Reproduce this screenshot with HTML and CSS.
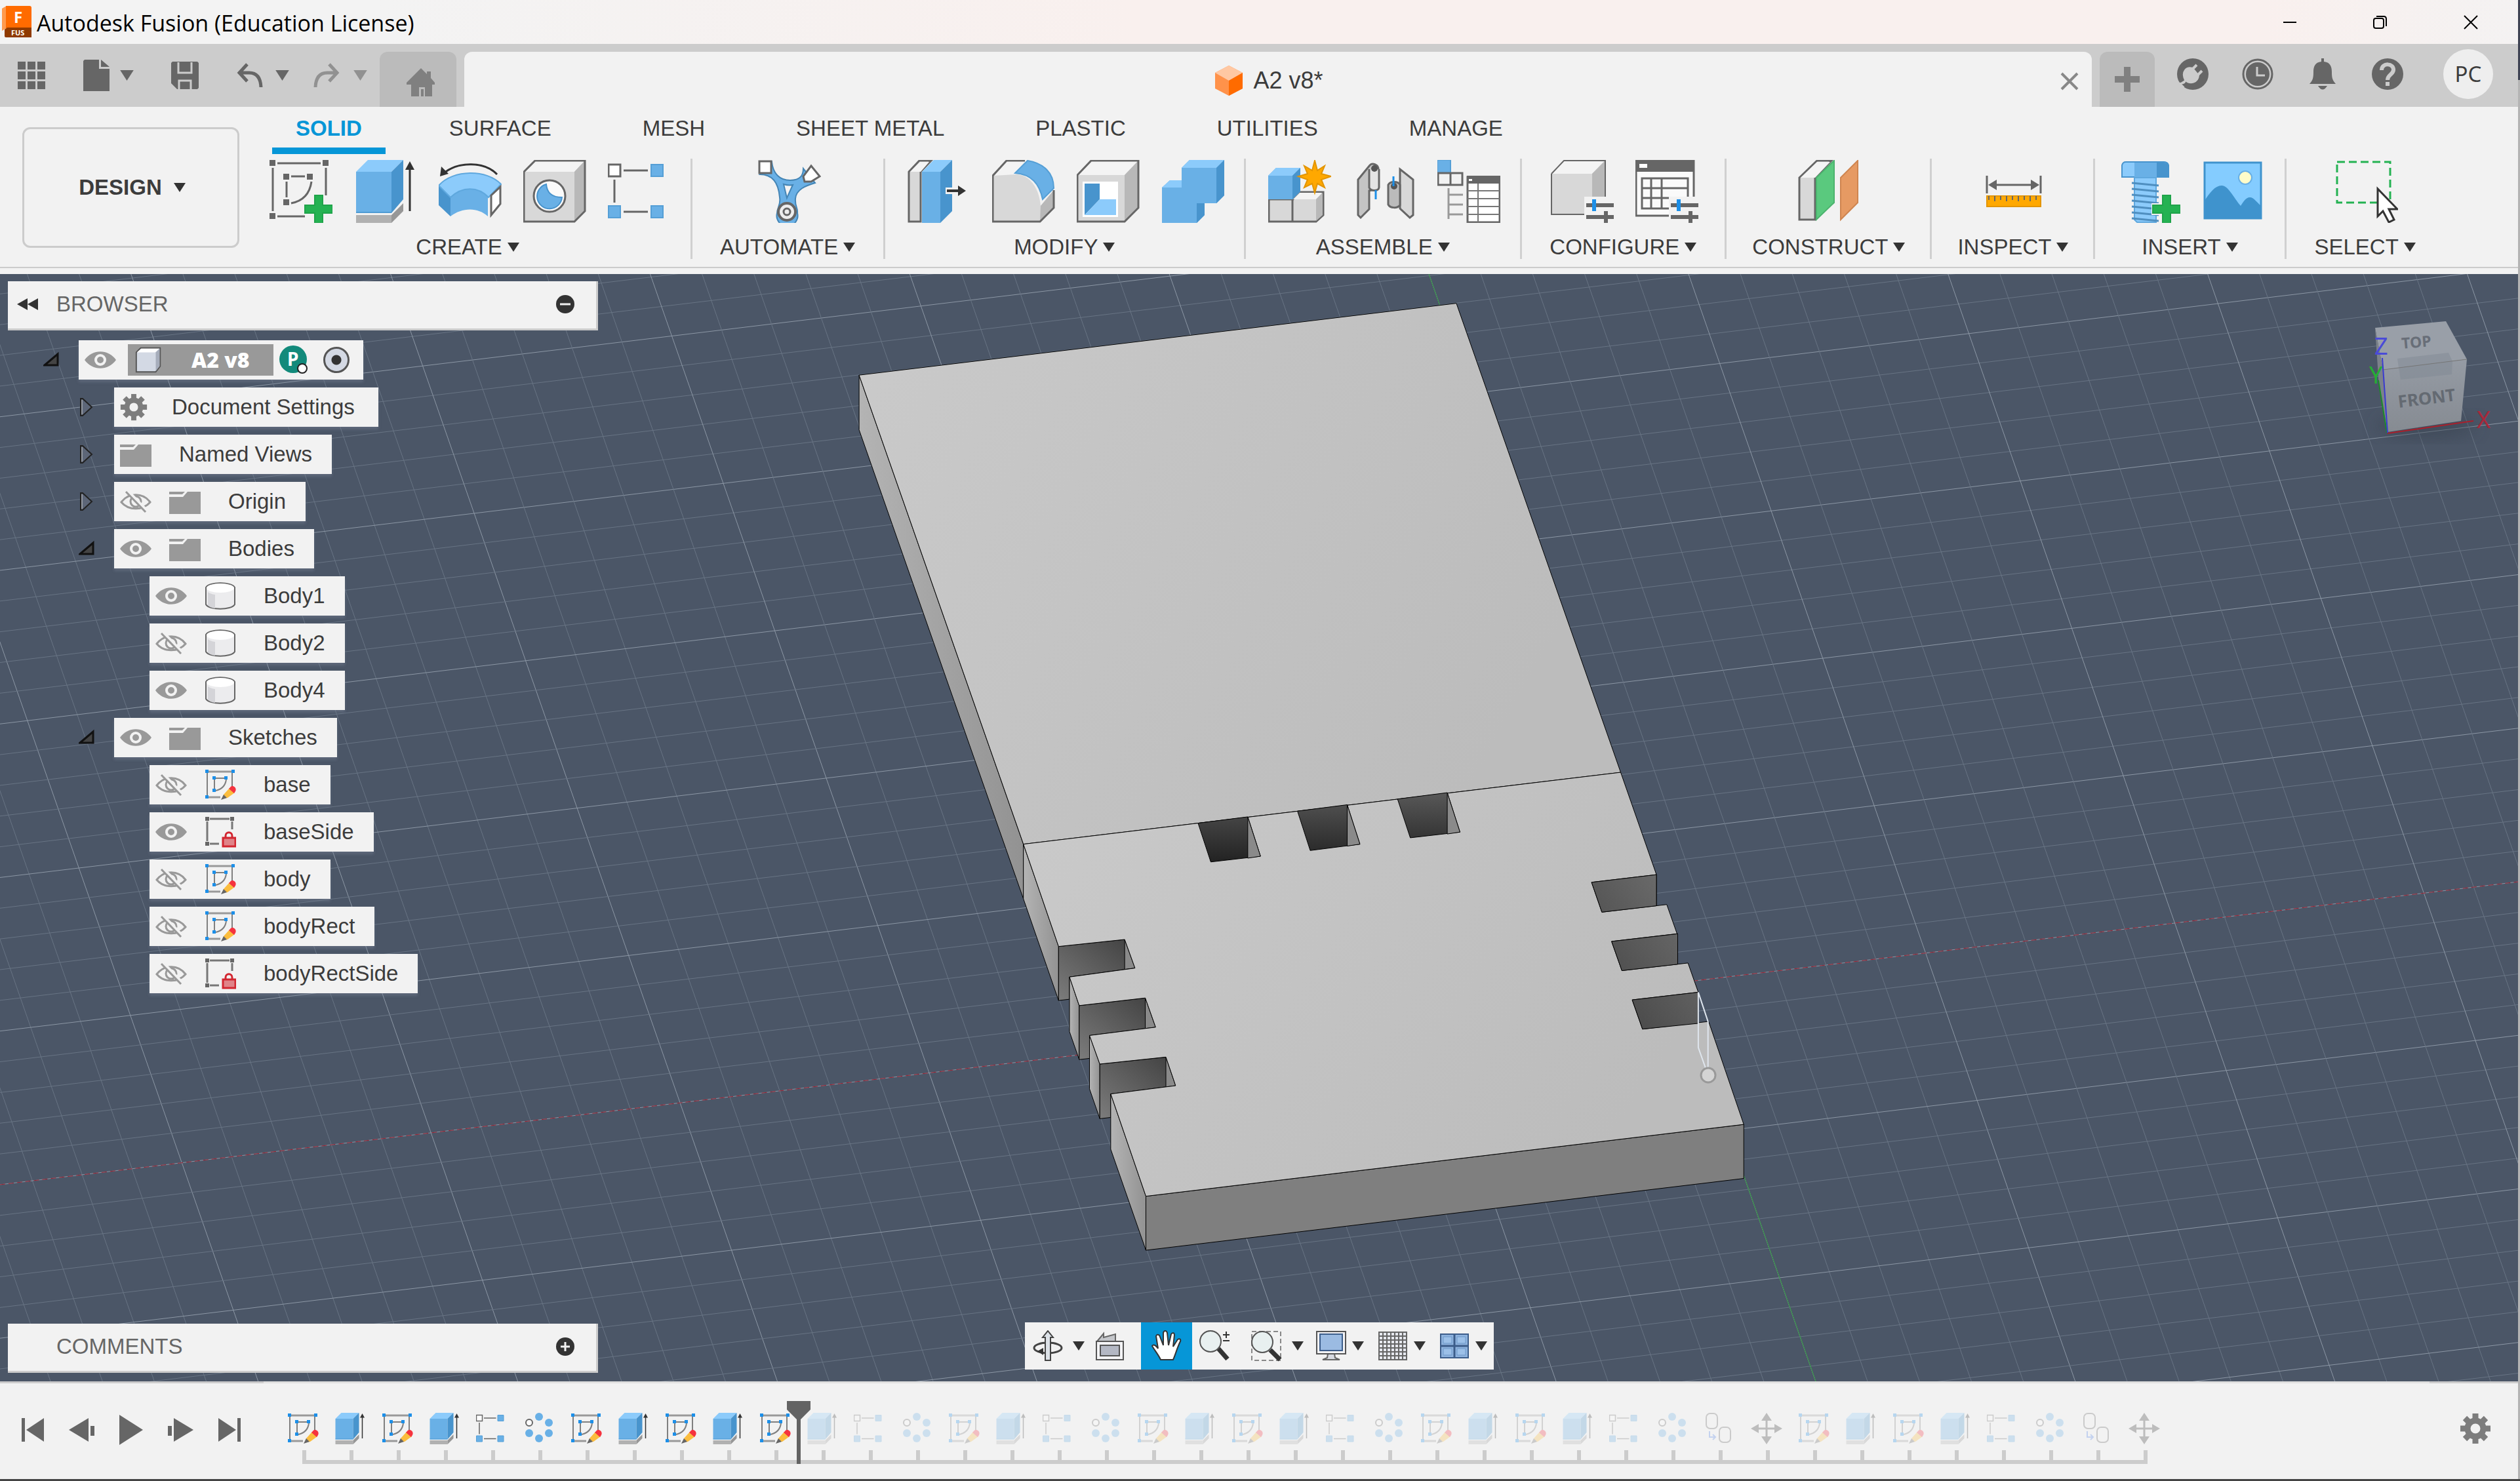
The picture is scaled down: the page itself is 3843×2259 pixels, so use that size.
FILE: index.html
```html
<!DOCTYPE html>
<html lang="en">
<head>
<meta charset="utf-8">
<title>Autodesk Fusion (Education License)</title>
<link rel="stylesheet" href="styles.css">
</head>
<body>
<svg class="sprite" aria-hidden="true">
  <symbol id="sketch-new" viewBox="0 0 96 96">
    <g fill="#666"><path d="M0 0h9v9H0zM81 0h9v9h-9zM0 81h9v9H0zM21 21h9v9h-9zM57 21h9v9h-9zM21 60h9v9h-9z"/></g>
    <path d="M12 5h66M5 12v66M12 86h42M86 12v42M33 25h21M26 33v24M64 33q-4 28-31 33" fill="none" stroke="#666" stroke-width="3"/>
    <path d="M69 54h12v15h15v12H81v15H69V81H54V69h15z" fill="#24b252" stroke="#1fa34a" stroke-width="2"/>
  </symbol>
  <symbol id="extrude" viewBox="0 0 96 96">
    <path d="M3 84h54v12H3z" fill="#b1b1b1"/><path d="M57 84l18-18v12L57 96z" fill="#979797"/>
    <path d="M3 18h54v63H3z" fill="#69b0e6"/><path d="M3 18L21 0h54L57 18z" fill="#8ccbfb"/><path d="M57 18L75 0v60L57 81z" fill="#4894cd"/>
    <path d="M3 80h54" stroke="#4f9bd3" stroke-width="2"/>
    <path d="M85 12v66" stroke="#333" stroke-width="3"/><path d="M85 2l7 13H78z" fill="#333"/>
  </symbol>
  <symbol id="revolve" viewBox="0 0 96 96">
    <path d="M0 39l18 17v30L0 69z" fill="#4894cd"/>
    <path d="M18 56C36 40 60 40 75 56v30C60 72 36 72 18 86z" fill="#69b0e6"/>
    <path d="M0 39C22 14 74 14 95 37L76 57C60 40 36 40 18 57z" fill="#8ccbfb" stroke="#5fa8de" stroke-width="2"/>
    <path d="M80 54l14-13v26L80 84z" fill="#fff" stroke="#666" stroke-width="3"/>
    <path d="M89 22C70 2 30 2 8 20" fill="none" stroke="#333" stroke-width="3"/><path d="M2 25l2-15 11 11z" fill="#333"/>
  </symbol>
  <symbol id="hole" viewBox="0 0 96 96">
    <path d="M1 18L18 1h76v77L78 94H1z" fill="#d8d8d8"/><path d="M1 18L18 1h76L78 18z" fill="#f4f4f4"/><path d="M78 18L94 1v77L78 94z" fill="#b8b8b8"/>
    <path d="M1 18L18 1h76v77L78 94H1z" fill="none" stroke="#666" stroke-width="3"/>
    <circle cx="40" cy="55" r="24" fill="#fafafa" stroke="#666" stroke-width="3"/>
    <path d="M35 37c1 13 9 20 24 20a19 19 0 1 1-24-20z" fill="#69b0e6" stroke="#4894cd" stroke-width="2"/>
  </symbol>
  <symbol id="pattern" viewBox="0 0 96 96">
    <path d="M1 7h18v18H1z" fill="#fff" stroke="#666" stroke-width="3"/>
    <path d="M66 7h18v18H66zM1 70h18v18H1zM66 70h18v18H66z" fill="#69b0e6" stroke="#559fd6" stroke-width="2"/>
    <path d="M24 16h37M24 79h37M10 30v35" stroke="#666" stroke-width="3"/>
  </symbol>
  <symbol id="automate" viewBox="0 0 96 96">
    <path d="M3 22L21 3c2 18 12 28 28 28s20-8 20-18l18 22c-14 4-29 10-30 24-1 12 4 14 3 22a16 16 0 1 1-31 0c0-8 6-12 4-24C31 32 20 22 3 22z" fill="#69b0e6" stroke="#4485b5" stroke-width="2"/>
    <path d="M39 37c6 2 9 2 14 1l-9 20z" fill="#f4f4f4" stroke="#4485b5" stroke-width="2"/>
    <path d="M2 2h18v18H2z" fill="#fff" stroke="#666" stroke-width="3"/><path d="M81 9l13 16-13 8H71l-2-8z" fill="#fff" stroke="#666" stroke-width="3"/>
    <circle cx="44" cy="79" r="13" fill="#eee" stroke="#666" stroke-width="4"/><circle cx="44" cy="79" r="5" fill="none" stroke="#666" stroke-width="3"/>
  </symbol>
  <symbol id="press-pull" viewBox="0 0 96 96">
    <path d="M2 18L18 1h18L20 18v76H2z" fill="#d8d8d8" stroke="#666" stroke-width="3"/><path d="M4 18L19 3h14L20 18z" fill="#f4f4f4"/>
    <path d="M22 18h28v78H22z" fill="#69b0e6"/><path d="M22 18L40 0h28L50 18z" fill="#8ccbfb"/><path d="M50 18L68 0v78L50 96z" fill="#4894cd"/>
    <path d="M58 42h14v-8l20 13-20 13v-8H58z" fill="#f2f2f2"/><path d="M60 45h17v-6l12 8-12 8v-6H60z" fill="#333"/>
  </symbol>
  <symbol id="fillet" viewBox="0 0 96 96">
    <path d="M1 24L22 1h28L36 22c22 0 36 22 38 48l20-23v26L73 94H1z" fill="#d8d8d8"/><path d="M1 24L22 1h28L36 22z" fill="#f4f4f4"/><path d="M74 70l20-24v27L73 94z" fill="#b8b8b8"/>
    <path d="M50 1H22L1 24v70h72l21-21V46" fill="none" stroke="#666" stroke-width="3"/>
    <path d="M54 1c24 4 40 18 40 42L77 60C72 36 60 22 35 20z" fill="#69b0e6" stroke="#559fd6" stroke-width="2"/>
  </symbol>
  <symbol id="shell" viewBox="0 0 96 96">
    <path d="M1 23L22 1h72v72L73 94H1z" fill="#d8d8d8"/><path d="M1 23L22 1h72L73 23z" fill="#f4f4f4"/><path d="M73 23L94 1v72L73 94z" fill="#b8b8b8"/>
    <path d="M1 23L22 1h72v72L73 94H1z" fill="none" stroke="#666" stroke-width="3"/>
    <path d="M9 33h54v54H9z" fill="#fff"/><path d="M12 36h23v24L12 84z" fill="#4894cd"/><path d="M12 84l23-24h25v24z" fill="#8ccbfb"/>
  </symbol>
  <symbol id="combine" viewBox="0 0 96 96">
    <path d="M1 42l12-11h18V12L43 0h53v54L84 66H66v18L54 96H1z" fill="#69b0e6"/>
    <path d="M1 42l12-11h18v11zM31 12L43 0h53L84 12z" fill="#8ccbfb"/><path d="M84 12L96 0v54L84 66zM54 66h12v18L54 96z" fill="#4894cd"/>
  </symbol>
  <symbol id="component" viewBox="0 0 96 96">
    <path d="M1 60h37l10-11h36v35L73 94H1z" fill="#d8d8d8" stroke="#666" stroke-width="3"/><path d="M38 60l10-10h34L73 60z" fill="#f4f4f4"/><path d="M73 60l10-10v34L73 93z" fill="#b8b8b8"/><path d="M37 60v34" stroke="#666" stroke-width="3"/>
    <path d="M0 24l12-12h37v36L37 60H0z" fill="#69b0e6"/><path d="M0 24l12-12h37L37 24z" fill="#8ccbfb"/><path d="M37 24l12-12v36L37 60z" fill="#4894cd"/>
    <path d="M71 1l4 15 11-7-5 12 15 4-15 5 5 12-11-6-4 14-4-14-12 6 5-12-14-5 14-4-5-12 12 7z" fill="#ffa800" stroke="#e39500" stroke-width="2"/>
  </symbol>
  <symbol id="joint" viewBox="0 0 96 96">
    <g stroke="#666" stroke-width="3"><path d="M8 30L26 8c4-4 12-1 13 5v30l-14 4v28L12 88l-4-4z" fill="#c4c4c4"/><path d="M25 14v28c2 6 14 6 15 0V14" fill="#e4e4e4"/><path d="M92 30L72 14v60l15 14 5-4z" fill="#d8d8d8"/><path d="M54 38v30c3 6 14 6 18 1V38c-3-6-15-6-18 0z" fill="#bbb"/></g>
    <circle cx="33" cy="13" r="5" fill="#555"/><circle cx="63" cy="40" r="5" fill="#555"/><path d="M35 46v14M62 25v15" stroke="#1c8fe8" stroke-width="3"/>
  </symbol>
  <symbol id="bom" viewBox="0 0 96 96">
    <path d="M0 0h20v20H0z" fill="#69b0e6" stroke="#559fd6" stroke-width="2"/><path d="M1 20h37v18H1zM20 20v18" fill="none" stroke="#666" stroke-width="3"/>
    <path d="M17 43v47M17 53h22M17 68h22M17 83h22" stroke="#999" stroke-width="3"/>
    <path d="M46 26h49v69H46z" fill="#fff" stroke="#666" stroke-width="3"/><path d="M45 24h51v12H45z" fill="#666"/><path d="M48 29h5v3h-5z" fill="#fff"/><path d="M46 47h49M46 59h49M46 71h49M46 83h49M62 36v59" stroke="#777" stroke-width="2"/>
  </symbol>
  <symbol id="config-part" viewBox="0 0 96 96">
    <path d="M1 21L20 1h62v82H1z" fill="#d8d8d8"/><path d="M1 21L20 1h62L63 21z" fill="#f4f4f4"/><path d="M63 21L83 1v62L63 83z" fill="#b8b8b8"/><path d="M1 21L20 1h63v62M1 21v62h62" fill="none" stroke="#666" stroke-width="2"/>
    <use href="#sliders"/>
  </symbol>
  <g id="sliders"><path d="M51 56h45v40H51z" fill="#f2f2f2"/><path d="M54 66h42v6H54zM54 84h42v6H54zM81 78h6v18h-6z" fill="#666"/><path d="M63 60h6v18h-6z" fill="#1c8fe8"/></g>
  <symbol id="config-table" viewBox="0 0 96 96">
    <path d="M1 1h88v84H1z" fill="#fafafa" stroke="#666" stroke-width="3"/><path d="M0 0h90v18H0z" fill="#666"/><path d="M6 6h12v6H6z" fill="#fff"/>
    <path d="M10 28h70v46H10zM10 43h70M10 58h70M24 28v46M40 28v46" fill="none" stroke="#666" stroke-width="3"/>
    <use href="#sliders"/>
  </symbol>
  <symbol id="construct" viewBox="0 0 96 96">
    <path d="M2 27L29 1h22L26 27v64H2z" fill="#d8d8d8" stroke="#666" stroke-width="3"/><path d="M4 27L29 3h20L26 27z" fill="#f4f4f4"/>
    <path d="M28 27L55 1v64L28 91z" fill="#5ac97e" stroke="#4cb36e" stroke-width="2"/><path d="M65 27L91 1v64L65 91z" fill="#e69a63" stroke="#cf8550" stroke-width="2"/>
  </symbol>
  <symbol id="measure" viewBox="0 0 96 96">
    <path d="M7 24v27M89 24v27M14 38h68" stroke="#666" stroke-width="3"/><path d="M9 38l13-8v16zM87 38l-13-8v16z" fill="#666"/>
    <path d="M7 55h82v16H7z" fill="#ffa800" stroke="#e39500" stroke-width="2"/><path d="M10 55v6M19 55v8M28 55v6M37 55v8M46 55v6M55 55v8M64 55v6M73 55v8M82 55v6" stroke="#666" stroke-width="2"/>
  </symbol>
  <symbol id="fastener" viewBox="0 0 96 96">
    <path d="M7 8c1-4 3-5 6-5h58c4 0 6 1 7 5v18H7z" fill="#8ccbfb" stroke="#4894cd" stroke-width="2"/><path d="M26 4h34v22H26z" fill="#69b0e6"/><path d="M60 4h11c4 0 6 1 7 4v18H60z" fill="#4894cd"/>
    <path d="M26 27h33v68H30l-4-4z" fill="#8ccbfb" stroke="#5fa8de" stroke-width="2"/>
    <path d="M22 35l41 4M22 44l41 4M22 53l41 4M22 62l41 4M22 71l41 4M22 80l41 4M22 89l41 4" stroke="#4f8fc0" stroke-width="3"/>
    <path d="M66 51h18v15h12v18H84v12H66V84H52V66h14z" fill="#f2f2f2"/><path d="M69 54h12v15h15v12H81v15H69V81H54V69h15z" fill="#24b252" stroke="#1fa34a" stroke-width="2"/>
  </symbol>
  <symbol id="canvas" viewBox="0 0 96 96">
    <path d="M4 4h86v85H4z" fill="#84ccff" stroke="#3f93cd" stroke-width="3"/><ellipse cx="66" cy="27" rx="10" ry="10" fill="#fffcc9" stroke="#69b0e6" stroke-width="2"/>
    <path d="M4 62c8-12 16-23 26-23s18 18 29 31c4-6 8-13 14-13s11 8 17 13v19H4z" fill="#3f93cd"/>
  </symbol>
  <symbol id="select" viewBox="0 0 96 96">
    <path d="M3 3h81v62H3z" fill="none" stroke="#24b252" stroke-width="3" stroke-dasharray="12 6"/>
    <path d="M65 44v42l8-8 9 17 8-4-8-16h13z" fill="#fff" stroke="#333" stroke-width="3"/>
  </symbol>
  <symbol id="sketch" viewBox="0 0 48 48">
    <path d="M6 4h36M6 43h18" fill="none" stroke="#999" stroke-width="3"/>
    <path d="M4 6v36M42 6v22M16 14h14M15 16v16M33 16q-2 14-16 17" fill="none" stroke="#808080" stroke-width="2"/>
    <path d="M1 1h5v5H1zM41 1h5v5h-5zM1 40h5v5H1zM12 11h5v5h-5zM30 11h5v5h-5zM12 30h5v5h-5z" fill="#1c8fe8"/>
    <path d="M38 29l8 7-11 8-8 1 2-6z" fill="#fbbd3e"/><path d="M29 39l5 5-9 3z" fill="#666"/><path d="M39 28c3-5 11 0 8 6l-2 3-8-7z" fill="#f5333f"/>
  </symbol>
  <symbol id="sketch-locked" viewBox="0 0 48 48">
    <path d="M8 4h30M4 8v30M42 8v12M8 42h14" fill="none" stroke="#777" stroke-width="3"/>
    <path d="M1 1h6v6H1zM39 1h6v6h-6zM1 39h6v6H1z" fill="#666"/>
    <path d="M32 34v-4c0-7 10-7 10 0v4" fill="none" stroke="#d22630" stroke-width="3"/><path d="M28 33h19v13H28z" fill="#e08388" stroke="#d22630" stroke-width="3"/>
  </symbol>
  <symbol id="circular" viewBox="0 0 48 48">
    <circle cx="9" cy="15" r="5" fill="#fff" stroke="#666" stroke-width="2"/>
    <g fill="#69b0e6"><circle cx="24" cy="6" r="6"/><circle cx="39" cy="15" r="6"/><circle cx="39" cy="31" r="6"/><circle cx="24" cy="39" r="6"/><circle cx="9" cy="31" r="6"/></g>
  </symbol>
  <symbol id="rigid" viewBox="0 0 48 48">
    <g fill="#f4f4f4" stroke="#666" stroke-width="2"><rect x="4" y="1" width="17" height="23" rx="6"/><rect x="24" y="22" width="17" height="23" rx="6"/></g><path d="M9 28v9h8M14 33l4 4-4 4" fill="none" stroke="#4b7fe8" stroke-width="2"/>
  </symbol>
  <symbol id="move" viewBox="0 0 48 48"><path d="M24 8v32M8 24h32" stroke="#333" stroke-width="3"/><path d="M24 0l8 12H16zM24 48l8-12H16zM0 24l12-7v14zM48 24l-12-7v14z" fill="#333"/></symbol>
  <symbol id="eye" viewBox="0 0 48 48"><path d="M0 24C12 7 36 7 48 24C36 41 12 41 0 24z" fill="#999"/><circle cx="24" cy="24" r="9" fill="#f2f2f2"/><circle cx="24" cy="24" r="5" fill="#999"/></symbol>
  <symbol id="eye-off" viewBox="0 0 48 48"><g fill="none" stroke="#999" stroke-width="3"><path d="M2 25C13 10 35 10 46 25C35 38 13 38 2 25z"/><circle cx="24" cy="24" r="8"/></g><path d="M12 9l30 31" stroke="#f2f2f2" stroke-width="6"/><path d="M9 9l30 31" stroke="#999" stroke-width="3"/></symbol>
  <symbol id="folder" viewBox="0 0 48 48"><path d="M0 9h24l-4 4H0zM0 17h21l7-8h20v34H0z" fill="#999"/></symbol>
  <symbol id="gear" viewBox="0 0 48 48"><circle cx="24" cy="24" r="12" fill="none" stroke="#7d7d7d" stroke-width="9"/><path d="M24 1v9M24 38v9M1 24h9M38 24h9M8 8l6 6M34 34l6 6M40 8l-6 6M14 34l-6 6" stroke="#7d7d7d" stroke-width="9"/></symbol>
  <symbol id="cylinder" viewBox="0 0 48 48"><path d="M2 11v26c5 9 39 9 44 0V11C41 2 7 2 2 11z" fill="#ececee" stroke="#666" stroke-width="2"/><ellipse cx="24" cy="12" rx="21" ry="7" fill="#fff"/><path d="M5 18q4 3 11 4v21q-8-1-11-5z" fill="#d4d4d8"/></symbol>
  <symbol id="cube" viewBox="0 0 48 48"><path d="M4 12l7-7h31v29l-7 9H4z" fill="#d3d9e4" stroke="#555" stroke-width="2"/><path d="M5 12l7-6h29l-7 6z" fill="#fff"/><path d="M35 12l6-6v28l-6 8z" fill="#a6adbb"/></symbol>
  <symbol id="open" viewBox="0 0 24 24"><path d="M2 20L22 3v17z" fill="#444" stroke="#111" stroke-width="3"/></symbol>
  <symbol id="closed" viewBox="0 0 24 30"><path d="M3 2h3l14 13L6 28H3z" fill="#5d6678" stroke="#222" stroke-width="2"/><path d="M5 4v22" stroke="#ccc" stroke-width="1"/></symbol>
  <symbol id="caret" viewBox="0 0 18 14"><path d="M0 0h18L9 14z" fill="currentColor"/></symbol>
</svg>

<header class="titlebar">
  <svg class="app-logo" viewBox="0 0 46 50"><path d="M0 4L7 0v34L0 38z" fill="#ff9a4d"/><path d="M6 0h36q3 0 3 3v31H6z" fill="#ff6b00"/><path d="M4 36l4-3h37v15H6q-2 0-2-2z" fill="#8f3a00"/><text x="18" y="26" class="logo-f">F</text><text x="14" y="45" class="logo-fus">FUS</text></svg>
  <h1>Autodesk Fusion (Education License)</h1>
  <div class="window-controls">
    <button aria-label="Minimize"><svg viewBox="0 0 22 22"><path d="M1 11h20" stroke="#000" stroke-width="2"/></svg></button>
    <button aria-label="Restore"><svg viewBox="0 0 22 22"><rect x="1" y="5" width="15" height="15" rx="3" fill="none" stroke="#000" stroke-width="2"/><path d="M5 2h11q4 0 4 4v11" fill="none" stroke="#000" stroke-width="2"/></svg></button>
    <button aria-label="Close"><svg viewBox="0 0 22 22"><path d="M1 1l20 20M21 1L1 21" stroke="#000" stroke-width="2"/></svg></button>
  </div>
</header>

<nav class="tabstrip">
  <div class="quick">
    <button aria-label="Data panel"><svg class="i48" viewBox="0 0 48 48"><g fill="#666"><path d="M3 3h12v12H3zM18 3h12v12H18zM33 3h12v12H33zM3 18h12v12H3zM18 18h12v12H18zM33 18h12v12H33zM3 33h12v12H3zM18 33h12v12H18zM33 33h12v12H33z"/></g></svg></button>
    <button aria-label="File" class="with-caret q-file"><svg class="i48" viewBox="0 0 48 48"><path d="M6 0h22v14h16v34H4V2zM31 0l13 11H31z" fill="#666"/></svg><svg class="caret-lg"><use href="#caret"/></svg></button>
    <button aria-label="Save" class="q-save"><svg class="i48" viewBox="0 0 48 48"><path d="M5 3h38l2 2v38l-2 2H12l-9-9V5z" fill="#666"/><path d="M14 4v16h20V4M15 45V32h18v13" fill="none" stroke="#ccc" stroke-width="3"/></svg></button>
    <button aria-label="Undo" class="with-caret q-undo"><svg class="i42" viewBox="0 0 42 42"><path d="M17 4L5 17l12 13M6 17h14q17 0 18 22" fill="none" stroke="#666" stroke-width="5"/></svg><svg class="caret-lg"><use href="#caret"/></svg></button>
    <button aria-label="Redo" class="with-caret q-redo"><svg class="i42" viewBox="0 0 42 42"><path d="M25 4l12 13-12 13M36 17H22Q5 17 4 39" fill="none" stroke="#919191" stroke-width="5"/></svg><svg class="caret-lg"><use href="#caret"/></svg></button>
  </div>
  <button class="home-tab" aria-label="Home"><svg class="i48" viewBox="0 0 48 48"><path d="M24 2l9 9V7h6v10l6 7v3h-4v18H30V31h-9v14H9V27H2v-3zM24 34h4v11h-4z" fill="#808080"/></svg></button>
  <div class="doc-tab">
    <div class="doc-name"><svg viewBox="0 0 44 48"><path d="M22 1l21 11v24L22 47 1 36V12z" fill="#ff924a"/><path d="M22 1l21 11-21 12L1 12z" fill="#ffc8a3"/><path d="M22 24l21-12v24L22 47z" fill="#ff6b00"/></svg><span>A2 v8*</span></div>
    <button class="tab-close" aria-label="Close tab"><svg viewBox="0 0 28 28"><path d="M2 2l24 24M26 2L2 26" stroke="#888" stroke-width="4"/></svg></button>
  </div>
  <button class="plus-tab" aria-label="New tab"><svg viewBox="0 0 38 38"><path d="M14 0h10v14h14v10H24v14H14V24H0V14h14z" fill="#808080"/></svg></button>
  <div class="account">
    <button aria-label="Extensions"><svg class="i48" viewBox="0 0 48 48"><circle cx="24" cy="24" r="24" fill="#666"/><path d="M4 38c7 2 9-2 8-5M12 33c-6-13 2-21 12-18l9 11c-1 11-13 15-21 7z" fill="#ccc" stroke="#ccc" stroke-width="2"/><path d="M22 18l8-8M30 27l8-8M3 38l7 7" stroke="#ccc" stroke-width="4"/></svg></button>
    <button aria-label="Job status"><svg class="i48" viewBox="0 0 48 48"><circle cx="24" cy="24" r="22" fill="none" stroke="#666" stroke-width="3"/><circle cx="24" cy="24" r="18" fill="#666"/><path d="M23 13v13h12" fill="none" stroke="#ccc" stroke-width="3"/></svg></button>
    <button aria-label="Notifications"><svg class="i48" viewBox="0 0 48 48"><path d="M22 0h4v5c10 1 12 8 12 16 0 11 2 13 6 18H4c4-5 6-7 6-18 0-8 2-15 12-16zM17 42h14q-7 11-14 0z" fill="#666"/></svg></button>
    <button aria-label="Help"><svg class="i48" viewBox="0 0 48 48"><circle cx="24" cy="24" r="24" fill="#666"/><path d="M15 18c0-12 19-11 18 0-1 7-9 7-9 15M24 36v6" fill="none" stroke="#ccc" stroke-width="6"/></svg></button>
    <button class="avatar">PC</button>
  </div>
</nav>

<section class="ribbon">
  <button class="workspace">DESIGN <svg class="caret"><use href="#caret"/></svg></button>
  <div class="ribbon-main">
    <div class="ribbon-tabs">
      <button class="active">SOLID</button><button>SURFACE</button><button>MESH</button><button>SHEET METAL</button><button>PLASTIC</button><button>UTILITIES</button><button>MANAGE</button>
    </div>
    <div class="groups">
      <div class="group"><div class="tools"><svg><use href="#sketch-new"/></svg><svg><use href="#extrude"/></svg><svg><use href="#revolve"/></svg><svg><use href="#hole"/></svg><svg><use href="#pattern"/></svg></div><button>CREATE<svg class="caret"><use href="#caret"/></svg></button></div>
      <div class="group"><div class="tools"><svg><use href="#automate"/></svg></div><button>AUTOMATE<svg class="caret"><use href="#caret"/></svg></button></div>
      <div class="group"><div class="tools"><svg><use href="#press-pull"/></svg><svg><use href="#fillet"/></svg><svg><use href="#shell"/></svg><svg><use href="#combine"/></svg></div><button>MODIFY<svg class="caret"><use href="#caret"/></svg></button></div>
      <div class="group"><div class="tools"><svg><use href="#component"/></svg><svg><use href="#joint"/></svg><svg><use href="#bom"/></svg></div><button>ASSEMBLE<svg class="caret"><use href="#caret"/></svg></button></div>
      <div class="group"><div class="tools"><svg><use href="#config-part"/></svg><svg><use href="#config-table"/></svg></div><button>CONFIGURE<svg class="caret"><use href="#caret"/></svg></button></div>
      <div class="group tight"><div class="tools"><svg><use href="#construct"/></svg></div><button>CONSTRUCT<svg class="caret"><use href="#caret"/></svg></button></div>
      <div class="group tight"><div class="tools"><svg><use href="#measure"/></svg></div><button>INSPECT<svg class="caret"><use href="#caret"/></svg></button></div>
      <div class="group"><div class="tools"><svg><use href="#fastener"/></svg><svg><use href="#canvas"/></svg></div><button>INSERT<svg class="caret"><use href="#caret"/></svg></button></div>
      <div class="group"><div class="tools"><svg><use href="#select"/></svg></div><button>SELECT<svg class="caret"><use href="#caret"/></svg></button></div>
    </div>
  </div>
</section>

<main class="viewport">
  <svg class="scene" viewBox="0 418 3840 1689" preserveAspectRatio="xMidYMid slice">
    <defs>
      <linearGradient id="top" x1="0" y1="0" x2="1" y2=".4"><stop offset="0" stop-color="#cacaca"/><stop offset="1" stop-color="#bcbcbc"/></linearGradient>
      <linearGradient id="side" x1="0" y1="0" x2="1" y2="0"><stop offset="0" stop-color="#b4b4b4"/><stop offset="1" stop-color="#929292"/></linearGradient>
      <linearGradient id="pit" x1="0" y1="0" x2="0" y2="1"><stop offset="0" stop-color="#585858"/><stop offset="1" stop-color="#222"/></linearGradient>
      <linearGradient id="notch" x1="0" y1="1" x2="1" y2="0"><stop offset="0" stop-color="#7c7c7c"/><stop offset="1" stop-color="#404040"/></linearGradient>
      <linearGradient id="notch-r" x1="0" y1="1" x2="1" y2="0"><stop offset="0" stop-color="#404040"/><stop offset="1" stop-color="#747474"/></linearGradient>
      <linearGradient id="cube-front" x1="0" y1="0" x2="0" y2="1"><stop offset="0" stop-color="#959ba4"/><stop offset="1" stop-color="#868b92"/></linearGradient>
      <filter id="soft" x="-20%" y="-20%" width="140%" height="140%"><feGaussianBlur stdDeviation="12"/></filter>
    </defs>
    <g id="grid"></g>
    <path d="M0 1807L3840 1345" stroke="#a02030" stroke-width="1" stroke-dasharray="8 5"/>
    <path d="M2179 418L2769 2107" stroke="#2c9a3c" stroke-width="1"/>
    <g class="model" transform="translate(1250 420) scale(.9247 .9694)">
      <path class="side" d="M65 157L336 895V981L65 243z"/>
      <path class="side" d="M336 895L394 1056V1141L336 981z"/>
      <path class="cut" d="M394 1056L503 1045L520 1090L412 1104V1139L394 1141z"/>
      <path class="side" d="M412 1104L428 1149V1234L412 1190z"/>
      <path class="cut" d="M428 1149L537 1137L554 1183L446 1196V1232L428 1234z"/>
      <path class="side" d="M445 1196L462 1241V1327L445 1280z"/>
      <path class="cut" d="M462 1241L571 1230L587 1275L480 1288V1325L462 1327z"/>
      <path class="side" d="M480 1288L538 1449V1534L480 1375z"/>
      <path class="front" d="M538 1449L1524 1336V1421L538 1534z"/>
      <path class="wall" d="M503 1045L520 1090L503 1092zM537 1137L554 1183L537 1185zM571 1230L587 1275L571 1277z"/>
      <path class="cut-r" d="M1273 955L1380 943V992L1290 1002zM1306 1048L1415 1036V1084L1323 1094zM1340 1140L1449 1128V1177L1357 1186z"/>
      <path class="top" d="M65 157L1050 44L1321 782L336 895z"/>
      <path class="top" d="M336 895L1321 782L1380 943L1273 955L1290 1002L1397 990L1414 1036L1306 1048L1323 1094L1432 1082L1449 1128L1340 1140L1357 1186L1466 1174L1524 1336L538 1449L480 1288L587 1275L571 1230L462 1241L445 1196L554 1183L537 1137L428 1149L412 1104L520 1090L503 1045L394 1056z"/>
      <path class="cut-r" d="M1273 955L1380 943V992L1290 1002zM1306 1048L1415 1036V1084L1323 1094zM1340 1140L1449 1128V1177L1357 1186z"/>
      <path class="pit" d="M624 862L706 852L727 914L645 923zM788 843L870 833L891 895L809 905zM953 824L1035 814L1056 876L974 885z"/>
      <path class="wall" d="M706 852L727 914L706 917zM870 833L891 895L870 898zM1035 814L1056 876L1035 879z"/>
      <path class="highlight" d="M1449 1128V1215L1465 1258V1174z"/>
    </g>
    <circle cx="2605" cy="1640" r="11" fill="#d4d4d4" stroke="#999" stroke-width="3"/>
    <ellipse cx="3700" cy="650" rx="75" ry="20" fill="#39424f" opacity=".5" filter="url(#soft)"/>
    <g class="viewcube">
      <path d="M3622 500L3730 490L3762 548L3634 564z" fill="#999fa8"/>
      <path d="M3622 500L3634 564L3641 659L3628 590z" fill="#7c828b"/>
      <path d="M3634 564L3762 548L3753 642L3641 659z" fill="url(#cube-front)"/>
      <path d="M3656 547L3734 538L3740 551L3739 571L3661 579L3658 561z" fill="#7f8792" opacity=".45"/>
      <path d="M3634 564L3762 548" stroke="#777" stroke-width="1"/>
      <path d="M3641 661L3772 642" stroke="#a8202c" stroke-width="2"/>
      <path d="M3627 580L3640 660" stroke="#1d8a2b" stroke-width="2"/>
      <path d="M3633 546L3641 660" stroke="#3a3ad0" stroke-width="2"/>
      <text x="3663" y="532" class="face-top" transform="rotate(-5 3663 532)">TOP</text>
      <text x="3658" y="622" class="face-front" transform="rotate(-7 3658 622)">FRONT</text>
      <text x="3621" y="541" class="axis" fill="#4a4ad8">Z</text>
      <text x="3613" y="585" class="axis" fill="#25ad35">Y</text>
      <text x="3777" y="653" class="axis" fill="#a8283a">X</text>
    </g>
  </svg>

  <aside class="browser">
    <div class="panel-bar"><svg class="collapse" viewBox="0 0 32 18"><path d="M16 0v18L0 9zM32 0v18L16 9z" fill="#333"/></svg><span>BROWSER</span><button aria-label="Hide panel"><svg viewBox="0 0 30 30"><circle cx="15" cy="15" r="14" fill="#333"/><path d="M7 15h16" stroke="#f2f2f2" stroke-width="3"/></svg></button></div>
    <ul class="tree">
      <li class="l0"><svg class="arrow"><use href="#open"/></svg><div class="node root"><svg><use href="#eye"/></svg><div class="chip"><svg><use href="#cube"/></svg><b>A2 v8</b></div><svg class="badge" viewBox="0 0 44 44"><circle cx="21" cy="21" r="21" fill="#128a7b"/><text x="12" y="31" class="badge-p">P</text><circle cx="35" cy="35" r="7" fill="#fff" stroke="#222" stroke-width="2"/></svg><input type="radio" name="active" aria-label="Activate component" checked></div></li>
      <li class="l1"><svg class="arrow"><use href="#closed"/></svg><div class="node settings"><svg><use href="#gear"/></svg><span>Document Settings</span></div></li>
      <li class="l1"><svg class="arrow"><use href="#closed"/></svg><div class="node"><svg><use href="#folder"/></svg><span>Named Views</span></div></li>
      <li class="l1"><svg class="arrow"><use href="#closed"/></svg><div class="node"><svg><use href="#eye-off"/></svg><svg><use href="#folder"/></svg><span>Origin</span></div></li>
      <li class="l1"><svg class="arrow"><use href="#open"/></svg><div class="node"><svg><use href="#eye"/></svg><svg><use href="#folder"/></svg><span>Bodies</span></div></li>
      <li class="l2"><div class="node"><svg><use href="#eye"/></svg><svg><use href="#cylinder"/></svg><span>Body1</span></div></li>
      <li class="l2"><div class="node"><svg><use href="#eye-off"/></svg><svg><use href="#cylinder"/></svg><span>Body2</span></div></li>
      <li class="l2"><div class="node"><svg><use href="#eye"/></svg><svg><use href="#cylinder"/></svg><span>Body4</span></div></li>
      <li class="l1"><svg class="arrow"><use href="#open"/></svg><div class="node"><svg><use href="#eye"/></svg><svg><use href="#folder"/></svg><span>Sketches</span></div></li>
      <li class="l2"><div class="node"><svg><use href="#eye-off"/></svg><svg><use href="#sketch"/></svg><span>base</span></div></li>
      <li class="l2"><div class="node"><svg><use href="#eye"/></svg><svg><use href="#sketch-locked"/></svg><span>baseSide</span></div></li>
      <li class="l2"><div class="node"><svg><use href="#eye-off"/></svg><svg><use href="#sketch"/></svg><span>body</span></div></li>
      <li class="l2"><div class="node"><svg><use href="#eye-off"/></svg><svg><use href="#sketch"/></svg><span>bodyRect</span></div></li>
      <li class="l2"><div class="node"><svg><use href="#eye-off"/></svg><svg><use href="#sketch-locked"/></svg><span>bodyRectSide</span></div></li>
    </ul>
  </aside>

  <div class="bottom-row">
    <div class="panel-bar comments"><span>COMMENTS</span><button aria-label="Add comment"><svg viewBox="0 0 30 30"><circle cx="15" cy="15" r="14" fill="#333"/><path d="M8 15h14M15 8v14" stroke="#f2f2f2" stroke-width="3"/></svg></button></div>
    <div class="navbar">
      <button aria-label="Orbit" class="has-menu orbit"><svg viewBox="0 0 48 48"><ellipse cx="24" cy="27" rx="21" ry="8" fill="none" stroke="#444" stroke-width="3"/><path d="M24 1l8 10h-4v35h-8V11h-4z" fill="#dde2e8" stroke="#444" stroke-width="2"/><path d="M8 32l9-5v11z" fill="#333"/></svg><svg class="caret"><use href="#caret"/></svg></button>
      <button aria-label="Look at" class="look"><svg viewBox="0 0 48 48"><path d="M4 17L14 5v6l18-5v11z" fill="#c4c6ca" stroke="#666" stroke-width="2"/><path d="M3 17h41v28H3z" fill="#f4f4f6" stroke="#555" stroke-width="2"/><path d="M9 23h29v16H9z" fill="#b4b8c4" stroke="#555" stroke-width="2"/></svg></button>
      <button aria-label="Pan" class="on"><svg viewBox="0 0 48 48"><path d="M15 45c-3-7-9-14-13-21 2-3 6-1 9 4L8 9c1-3 5-3 6 1l5 13V4c1-4 5-4 6 0l2 19 4-17c2-3 5-2 5 1l-2 18 7-11c3-2 5 0 4 3-5 10-7 19-11 28z" fill="#fff" stroke="#333" stroke-width="2"/></svg></button>
      <button aria-label="Zoom" class="zoom"><svg viewBox="0 0 48 48"><path d="M30 28l14 16" stroke="#333" stroke-width="7"/><circle cx="18" cy="17" r="16" fill="#e8f0f0" stroke="#555" stroke-width="2"/><path d="M37 7h10M42 2v10M37 16h10" stroke="#333" stroke-width="2"/></svg></button>
      <button aria-label="Fit" class="has-menu fit"><svg viewBox="0 0 48 48"><path d="M2 2h44v44H2z" fill="none" stroke="#888" stroke-width="2" stroke-dasharray="7 4"/><path d="M30 30l15 15" stroke="#333" stroke-width="7"/><circle cx="18" cy="18" r="16" fill="#e8f0f0" stroke="#555" stroke-width="2"/></svg><svg class="caret"><use href="#caret"/></svg></button>
      <button aria-label="Display settings" class="has-menu"><svg viewBox="0 0 48 48"><path d="M19 36h10l1 6 7 3H11l7-3z" fill="#d8dbe2" stroke="#666" stroke-width="2"/><path d="M2 2h44v34H2z" fill="#f4f4f6" stroke="#555" stroke-width="2"/><path d="M7 6h34v25H7z" fill="#9bbbe2" stroke="#3c5d8a" stroke-width="2"/></svg><svg class="caret"><use href="#caret"/></svg></button>
      <button aria-label="Grid and snaps" class="has-menu"><svg viewBox="0 0 48 48"><path d="M3 3h42v42H3z" fill="#e6e8ee"/><path d="M3 3h42v42H3zM9 3v42M15 3v42M21 3v42M27 3v42M33 3v42M39 3v42M3 9h42M3 15h42M3 21h42M3 27h42M3 33h42M3 39h42" fill="none" stroke="#666" stroke-width="2"/></svg><svg class="caret"><use href="#caret"/></svg></button>
      <button aria-label="Viewports" class="has-menu"><svg viewBox="0 0 48 48"><path d="M3 6h42v36H3z" fill="#8fb3de" stroke="#3c5d8a" stroke-width="2"/><path d="M24 6v36M3 24h42" stroke="#3c5d8a" stroke-width="3"/><path d="M7 10h13v10H7zM28 10h13v10H28zM7 28h13v10H7zM28 28h13v10H28z" fill="#9cc0e8" stroke="#6d97c8" stroke-width="1"/></svg><svg class="caret"><use href="#caret"/></svg></button>
    </div>
  </div>
</main>

<footer class="timeline">
  <div class="playback">
    <button aria-label="Go to start"><svg viewBox="0 0 48 48"><path d="M7 6h5v36H7zM41 6v36L14 24z" fill="#666"/></svg></button>
    <button aria-label="Step back"><svg viewBox="0 0 48 48"><path d="M34 6v36L4 24zM37 18h6v15h-6z" fill="#666"/></svg></button>
    <button aria-label="Play"><svg viewBox="0 0 48 48"><path d="M6 1v46l36-23z" fill="#666"/></svg></button>
    <button aria-label="Step forward"><svg viewBox="0 0 48 48"><path d="M14 6v36l30-18zM5 18h6v15H5z" fill="#666"/></svg></button>
    <button aria-label="Go to end"><svg viewBox="0 0 48 48"><path d="M36 6h5v36h-5zM7 6v36l27-18z" fill="#666"/></svg></button>
  </div>
  <div class="track">
    <ol id="features"></ol>
    <div class="rail"></div>
    <svg class="marker" viewBox="0 0 36 96"><path d="M0 0h36v13L21 28v68h-6V28L0 13z" fill="#636363"/></svg>
  </div>
  <button class="timeline-settings" aria-label="Timeline settings"><svg viewBox="0 0 48 48"><use href="#gear"/></svg></button>
</footer>
<script src="script.js"></script>
</body>
</html>
```
FILE: styles.css
```css
* { box-sizing: border-box; }
html { height: 100%; }
body {
  margin: 0;
  min-height: 100vh;
  display: flex;
  flex-direction: column;
  padding: 0 3px 3px 0;
  font: 33px/40px "Liberation Sans", Arial, sans-serif;
  color: #3c3c3c;
  background: linear-gradient(#3d4252 122px, #b4b4b4 122px calc(100% - 3px), #444 calc(100% - 3px));
}
button {
  border: 0;
  padding: 0;
  margin: 0;
  background: none;
  font: inherit;
  color: inherit;
  display: flex;
  align-items: center;
  justify-content: center;
}
svg { display: block; flex: none; }
.sprite { position: absolute; width: 0; height: 0; }
.caret { width: 18px; height: 14px; color: #333; }
.i48 { width: 48px; height: 48px; }
.i42 { width: 42px; height: 42px; }

/* title bar */
.titlebar {
  height: 67px;
  display: flex;
  align-items: center;
  gap: 7px;
  padding: 0 51px 0 3px;
  background: linear-gradient(90deg, #f3f3f3 15%, #f9f0ee 45%, #f9f0ee 90%, #f4f2f2);
}
.titlebar h1 { margin: 0; padding-top: 2px; font: 34px/40px "Open Sans", "Noto Sans", sans-serif; color: #000; }
.app-logo { width: 46px; height: 50px; }
.logo-f { font: bold 24px "Noto Sans", sans-serif; fill: #fff; }
.logo-fus { font: bold 11px "Noto Sans", sans-serif; fill: #fff; }
.window-controls { margin-left: auto; display: flex; }
.window-controls button { width: 138px; height: 67px; }
.window-controls svg { width: 22px; height: 22px; }
.window-controls button:last-child { width: 42px; margin-left: 48px; }

/* document tabs */
.tabstrip { height: 96px; display: flex; background: #ccc; }
.quick { width: 579px; display: flex; align-items: center; padding-left: 24px; }
.caret-lg { width: 21px; height: 16px; color: #666; }
.with-caret { gap: 12px; }
.q-file { margin-left: 51px; }
.q-save { margin-left: 54px; }
.q-undo { margin-left: 54px; gap: 18px; }
.q-redo { margin-left: 36px; gap: 20px; }
.q-redo .caret-lg { color: #919191; }
.home-tab { width: 117px; margin: 12px 12px 0 0; padding: 10px 0 0 8px; border-radius: 12px 12px 0 0; background: #bbb; }
.doc-tab { flex: 1; margin-top: 12px; border-radius: 12px 12px 0 0; background: #f2f2f2; display: flex; align-items: center; padding: 6px 20px 0 20px; }
.doc-name { flex: 1; display: flex; align-items: center; justify-content: center; gap: 15px; font-size: 36px; padding-bottom: 2px; }
.doc-name svg { width: 44px; height: 48px; }
.tab-close svg { width: 28px; height: 28px; }
.plus-tab { width: 84px; margin: 12px 34px 0 12px; padding-left: 0; border-radius: 12px 12px 0 0; background: #bbb; }
.plus-tab svg { width: 38px; height: 38px; }
.account { display: flex; align-items: center; gap: 51px; padding: 0 38px 4px 0; }
.avatar { width: 76px; height: 76px; margin-left: 10px; border-radius: 50%; background: #eee; font: 33px/40px "Noto Sans", sans-serif; }

/* ribbon */
.ribbon {
  height: 255px;
  display: flex;
  padding: 0 0 8px 34px;
  background: linear-gradient(#ccc, #ccc) 0 244px / 100% 2px no-repeat, #f2f2f2;
}
.workspace { width: 331px; height: 184px; margin: 31px 12px 0 0; padding-left: 4px; border: 3px solid #ccc; border-radius: 12px; font-weight: bold; gap: 18px; }
.ribbon-main { flex: 1; }
.ribbon-tabs { display: flex; gap: 67px; padding-left: 38px; }
.ribbon-tabs button { height: 72px; padding: 4px 36px 0; border-bottom: 10px solid transparent; }
.ribbon-tabs .active { font-weight: bold; color: #0696d7; border-color: #0696d7; margin-right: -6px; }
.groups { display: flex; margin-top: 7px; }
.group { height: 153px; display: flex; flex-direction: column; align-items: center; justify-content: space-between; border-right: 3px solid #d0d0d0; }
.group:last-child { border: 0; }
.tools { display: flex; gap: 33px; padding: 2px 30px 0 34px; }
.tools svg { width: 96px; height: 96px; }
.group button { gap: 8px; padding: 0 43px 0 42px; line-height: 36px; }
.group:first-child button { padding: 0 46px 0 42px; }
.group.tight button { padding: 0 38px 0 39px; }

/* viewport */
.viewport { flex: 1; position: relative; display: flex; flex-direction: column; justify-content: space-between; padding: 11px 12px 13px; background: #4b5667; overflow: hidden; }
.scene { position: absolute; inset: 0; width: 100%; height: 100%; }
.scene .minor { stroke: #687484; stroke-width: 1; }
.scene .major { stroke: #8c97a5; stroke-width: 1; }
.model path { vector-effect: non-scaling-stroke; stroke: #000; stroke-width: 1; }
.model .top { fill: url(#top); }
.model .side { fill: url(#side); }
.model .front { fill: #7f7f7f; }
.model .cut { fill: url(#notch); }
.model .cut-r { fill: url(#notch-r); }
.model .pit { fill: url(#pit); }
.model .wall { fill: #8a8a8a; }
.model .highlight { fill: none; stroke: #dfe6ee; stroke-width: 2; }
.face-top { font: bold 23px "Noto Sans", sans-serif; fill: #686e78; }
.face-front { font: bold 26px "Noto Sans", sans-serif; fill: #646a72; }
.axis { font: 36px "Noto Sans", sans-serif; }

.panel-bar { position: relative; width: 900px; height: 75px; display: flex; align-items: center; padding: 0 32px 2px 14px; background: #f2f2f2; border: solid #ccc; border-width: 0 3px 3px 0; color: #666; }
.collapse { width: 32px; height: 18px; margin-right: 28px; }
.panel-bar button { margin-left: auto; }
.panel-bar button svg { width: 30px; height: 30px; }
.comments { padding-left: 74px; }
.browser { position: relative; align-self: flex-start; }
.tree { list-style: none; margin: 15px 0 0; padding: 0; display: flex; flex-direction: column; gap: 12px; }
.tree li { display: flex; align-items: center; gap: 30px; }
.l0 { padding-left: 54px; }
.l1 { padding-left: 108px; }
.l2 { padding-left: 216px; }
.arrow { width: 24px; height: 30px; }
.node { height: 60px; display: flex; align-items: center; gap: 27px; padding: 0 30px 0 9px; background: #f2f2f2; box-shadow: 0 4px 4px rgba(120, 130, 150, .4); }
.node > svg { width: 48px; height: 48px; }
.node span { margin-left: 15px; }
.node.root { gap: 9px; padding-right: 21px; }
.chip { width: 222px; height: 48px; margin-left: 9px; display: flex; align-items: center; gap: 42px; padding-left: 9px; background: #999; color: #fff; font: bold 32px/40px "Open Sans", "Noto Sans", sans-serif; }
.chip svg { width: 46px; height: 46px; }
.node .badge { width: 44px; height: 44px; }
.badge-p { font: bold 28px "Noto Sans", sans-serif; fill: #fff; }
.root input { appearance: none; width: 40px; height: 40px; margin: 0 0 0 14px; border: 3px solid #555; border-radius: 50%; background: radial-gradient(#333 0 7px, #d4d9e4 8px); }
.node.settings { gap: 22px; padding-right: 36px; }
.node.settings svg { width: 42px; height: 42px; }

.bottom-row { position: relative; display: grid; grid-template-columns: 1fr auto 1fr; align-items: end; }
.navbar { display: flex; height: 72px; margin-bottom: 5px; background: #f2f2f2; }
.navbar button { width: 78px; gap: 8px; }
.navbar button > svg:first-child { width: 48px; height: 48px; }
.navbar .has-menu { width: 94px; }
.navbar .orbit { width: 102px; gap: 14px; }
.navbar .look { width: 75px; padding-right: 18px; }
.navbar .zoom { padding-right: 10px; }
.navbar .fit { width: 100px; gap: 15px; padding-left: 3px; }
.navbar .on { background: #0696d7; }

/* timeline */
.timeline { height: 149px; display: flex; align-items: flex-start; background: linear-gradient(90deg, #ccc 402px, #e0e0e0 402px calc(100% - 135px), #ccc calc(100% - 135px)) 0 0 / 100% 3px no-repeat, #f2f2f2; padding: 48px 41px 0 26px; }
.playback { display: flex; gap: 27px; padding-top: 2px; }
.playback svg { width: 48px; height: 48px; }
.track { position: relative; margin-left: 54px; }
.track ol { list-style: none; margin: 0; padding: 0; display: flex; }
.track li { width: 72px; display: flex; flex-direction: column; align-items: center; gap: 9px; }
.track li svg { width: 48px; height: 48px; margin-right: 4px; }
.track li::after { content: ""; width: 6px; height: 15px; background: #ccc; }
.track .ahead svg { opacity: .27; }
.rail { height: 6px; margin: 0 33px; background: #ccc; }
.marker { position: absolute; left: 772px; top: -18px; width: 36px; height: 96px; }
.timeline-settings { margin-left: auto; }
.timeline-settings svg { width: 48px; height: 48px; }
```
FILE: script.js
```js
const NS = "http://www.w3.org/2000/svg";

// Ground plane grid: five minor cells to each major one, centred on the origin.
const origin = [2556.7, 1499.4];
const u = [75.98, -9.14];
const v = [15.7, 44.96];
const grid = document.getElementById("grid");

function addLine(a, b, major) {
  const line = document.createElementNS(NS, "line");
  line.setAttribute("x1", a[0]);
  line.setAttribute("y1", a[1]);
  line.setAttribute("x2", b[0]);
  line.setAttribute("y2", b[1]);
  line.setAttribute("class", major ? "major" : "minor");
  grid.append(line);
}
const at = (i, j) => [origin[0] + u[0] * i + v[0] * j, origin[1] + u[1] * i + v[1] * j];

for (let i = -50; i <= 50; i++) {
  addLine(at(i, -60), at(i, 60), i % 5 === 0);
  addLine(at(-60, i), at(60, i), i % 5 === 0);
}

// Feature history, in order; features from index 11 on are rolled back.
const icons = { S: "sketch", E: "extrude", P: "pattern", C: "circular", J: "rigid", M: "move" };
const features = "SESEPCSESES" + "EPCSEPCSESEPCSESEPCJMSESEPCJM";
const list = document.getElementById("features");
[...features].forEach((key, i) => {
  const li = document.createElement("li");
  if (i >= 11) li.className = "ahead";
  li.innerHTML = `<svg><use href="#${icons[key]}"/></svg>`;
  list.append(li);
});
```
